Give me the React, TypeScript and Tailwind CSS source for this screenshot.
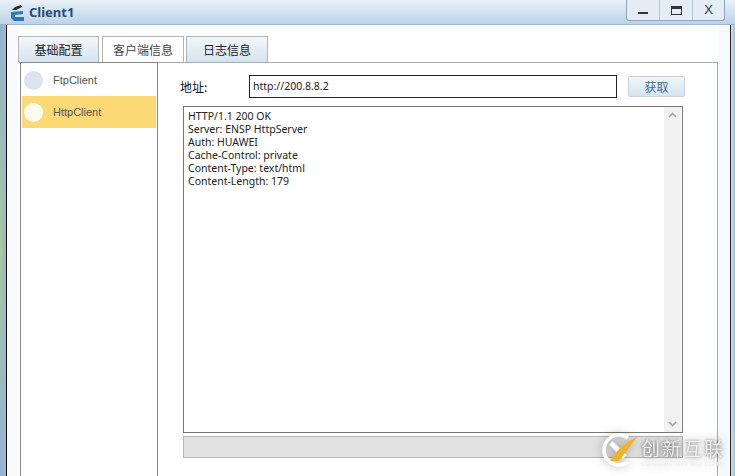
export default function App() {
  const responseLines = [
    "HTTP/1.1 200 OK",
    "Server: ENSP HttpServer",
    "Auth: HUAWEI",
    "Cache-Control: private",
    "Content-Type: text/html",
    "Content-Length: 179",
  ];

  return (
    <div className="relative w-[735px] h-[476px] overflow-hidden bg-white font-['Liberation_Sans',sans-serif] text-[#222]">

      {/* TITLE BAR */}
      <div className="h-[25px] flex justify-between bg-gradient-to-b from-[#eaf1f8] to-[#bcd3e8] border-b border-[#9db8d0] pl-[9px] pr-[10px]">
        <div className="flex items-center gap-[3px] h-[25px]">
          <svg width="17" height="20" viewBox="0 0 17 20">
            <path d="M3 7 L6 4 L12 2 L13 4 L7 7 Z" fill="#2b2b2b" />
            <path d="M2 9 L14 8 L14 11 L6 12 L6 14 L15 14 L15 18 L5 18 L2 15 Z" fill="#2f78b7" />
            <path d="M7 12.5 H13" stroke="#cfe2f2" strokeWidth="1" />
          </svg>
          <span className="text-[13px] font-bold text-[#1f4e79] font-['Noto_Sans',sans-serif]">Client1</span>
        </div>
        <div className="flex h-[21px] border border-t-0 border-[#8ea6bd] rounded-b-[3px] bg-[#e4edf5]">
          <div className="w-[33px] flex items-center justify-center border-r border-[#b5c6d6]">
            <div className="w-[10px] h-[2px] mt-[6px] bg-[#333]" />
          </div>
          <div className="w-[33px] flex items-center justify-center border-r border-[#b5c6d6]">
            <div className="w-[11px] h-[9px] border border-t-[3px] border-[#333]" />
          </div>
          <div className="w-[31px] flex items-center justify-center text-[13px] text-[#333]">X</div>
        </div>
      </div>

      <div className="flex h-[451px]">
        {/* LEFT FRAME */}
        <div className="w-[3px] bg-gradient-to-b from-[#8fb3cf] via-[#a3c9a0] to-[#8fb3d8]" />
        <div className="w-[3px] bg-[#a9b0c8]" />
        <div className="w-px bg-[#111]" />

        {/* BODY */}
        <div className="w-[11px] bg-[#f9fafe]" />
        <div className="w-[700px] bg-white pt-[11px]">

          {/* TABS */}
          <div className="flex h-[26px] text-[12px] font-['Noto_Sans_CJK_SC',sans-serif]">
            <div className="w-[81px] mr-[3px] flex items-center justify-center border border-b-0 border-[#b5b5b5] bg-gradient-to-b from-[#f3f7fb] to-[#d5e3ef] text-[#222]">基础配置</div>
            <div className="w-[82px] mr-[2px] flex items-center justify-center border border-b-0 border-[#b5b5b5] bg-white text-[#444]">客户端信息</div>
            <div className="w-[82px] flex items-center justify-center border border-b-0 border-[#b5b5b5] bg-gradient-to-b from-[#f3f7fb] to-[#d5e3ef] text-[#222]">日志信息</div>
          </div>

          <div className="flex h-[414px] ml-px w-[699px] border-t border-r border-[#aaa]">

            {/* SIDEBAR */}
            <div className="w-[138px] ml-px -mt-px border-l border-r border-t border-[#8a8a8a] bg-white pt-px pl-px pr-px text-[11px] text-[#555]">
              <div className="h-[32px] flex items-center gap-[10px] pl-[2px]">
                <div className="w-[19px] h-[19px] rounded-full bg-[#dbe4ef]" />
                <span>FtpClient</span>
              </div>
              <div className="h-[32px] flex items-center gap-[10px] pl-[2px] bg-[#fbd975]">
                <div className="w-[19px] h-[19px] rounded-full bg-[#fdfbf0]" />
                <span>HttpClient</span>
              </div>
            </div>

            {/* CONTENT */}
            <div className="flex-1 flex flex-col pl-[25px] pt-[12px]">
              <div className="flex items-center h-[23px]">
                <span className="w-[66px] -ml-[3px] mr-[3px] text-[12px] text-[#111] font-['Noto_Sans_CJK_SC',sans-serif]">地址:</span>
                <div className="w-[368px] h-[23px] border border-[#222] bg-white pl-[3px] flex items-center text-[10.5px] text-[#222] font-['Noto_Sans',sans-serif]">http://200.8.8.2</div>
                <button className="w-[57px] h-[21px] ml-[11px] border border-[#c4d2de] rounded-[2px] bg-gradient-to-b from-[#f2f7fb] to-[#d3e3f0] text-[12px] text-[#3f6f85] font-['Noto_Sans_CJK_SC',sans-serif]">获取</button>
              </div>

              <div className="mt-[8px] w-[500px] h-[327px] flex border border-[#777] bg-white">
                <div className="flex-1 pl-[4px] pt-[3px] text-[10.5px] leading-[13px] text-[#222] font-['Noto_Sans',sans-serif]">
                  {responseLines.map((line) => (
                    <div key={line}>{line}</div>
                  ))}
                </div>
                <div className="w-[17px] flex flex-col justify-between items-center bg-[#f1f1f1] mr-px py-[5px] text-[#a6a6a6]">
                  <svg width="9" height="6" viewBox="0 0 9 6"><path d="M1 5 L4.5 1.5 L8 5" stroke="currentColor" strokeWidth="1.6" fill="none" /></svg>
                  <svg width="9" height="6" viewBox="0 0 9 6"><path d="M1 1 L4.5 4.5 L8 1" stroke="currentColor" strokeWidth="1.6" fill="none" /></svg>
                </div>
              </div>

              <div className="mt-[3px] w-[500px] h-[22px] border border-[#b5b5b5] bg-[#e2e2e2]" />
            </div>
          </div>
        </div>
        <div className="w-[12px] bg-[#f6f9fd]" />

        {/* RIGHT FRAME */}
        <div className="w-px bg-[#222]" />
        <div className="w-[4px] bg-gradient-to-r from-[#d5e2ee] to-[#a9bccd]" />
      </div>

      {/* WATERMARK */}
      <div className="absolute left-[600px] top-[431px] flex items-center gap-[4px] drop-shadow-[0_0_5px_rgba(0,0,0,0.3)]">
        <svg width="37" height="36" viewBox="0 0 37 36">
          <path d="M28 6 A15 15 0 1 0 28 30" stroke="#ffffff" strokeWidth="3.5" fill="none" />
          <path d="M11 11 L25 25" stroke="#ffffff" strokeWidth="5" />
          <path d="M10 29 Q20 12 37 5 Q28 17 19 29 Z" fill="#f0b429" />
        </svg>
        <div className="flex flex-col items-start pt-[3px]">
          <span className="text-[19px] leading-[27px] tracking-[2px] text-[#ededed] [text-shadow:0_0_3px_rgba(0,0,0,0.45)] font-['Noto_Sans_CJK_SC',sans-serif]">创新互联</span>
          <span className="text-[6px] leading-[7px] tracking-[1px] text-[#ededed]">CHUANG XIN HU LIAN</span>
        </div>
      </div>
    </div>
  );
}
